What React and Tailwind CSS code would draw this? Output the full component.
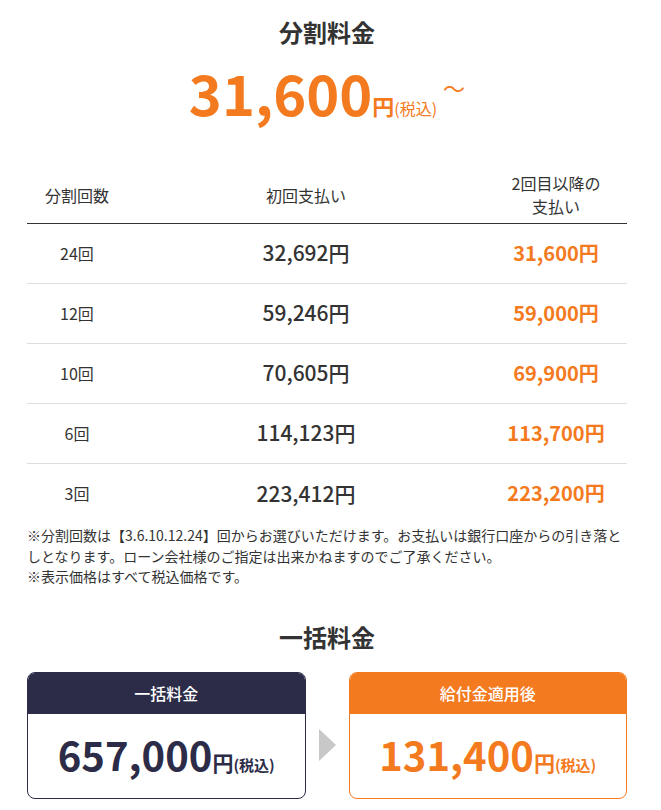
import React from "react";

const ORANGE = "text-[#f47a20]";

const rows = [
  { n: "24回", first: "32,692円", rest: "31,600円" },
  { n: "12回", first: "59,246円", rest: "59,000円" },
  { n: "10回", first: "70,605円", rest: "69,900円" },
  { n: "6回", first: "114,123円", rest: "113,700円" },
  { n: "3回", first: "223,412円", rest: "223,200円" },
];

function PriceCard({ label, amount, dark }) {
  return (
    <div className={`flex-1 rounded-lg border overflow-hidden bg-white ${dark ? "border-[#2c2c48]" : "border-[#f47a20]"}`}>
      <div className={`h-[41px] flex items-center justify-center text-white text-[16px] font-medium ${dark ? "bg-[#2c2c48]" : "bg-[#f47a20]"}`}>
        {label}
      </div>
      <div className={`h-[84px] flex items-center justify-center pb-[4px] ${dark ? "text-[#2c2c48]" : "text-[#f47a20]"}`}>
        <span className="text-[40px] font-bold leading-none">{amount}</span>
        <span className="text-[21px] font-bold leading-none self-end mb-[21px]">円</span>
        <span className="text-[15px] font-bold leading-none self-end mb-[22px]">(税込)</span>
      </div>
    </div>
  );
}

export default function App() {
  return (
    <div className="w-[661px] bg-white text-[#333] pl-[27px] pr-[34px] pt-[14px]" style={{ fontFamily: '"Noto Sans CJK JP", "Noto Sans", sans-serif' }}>
      <h2 className="text-center text-[24px] font-bold leading-[36px]">分割料金</h2>

      <div className={`flex justify-center items-end ${ORANGE} mt-[10px]`}>
        <span className="text-[56px] font-bold leading-[64px]">31,600</span>
        <span className="text-[22px] font-bold leading-none mb-[8px]">円</span>
        <span className="text-[16px] leading-none mb-[8px]">(税込)</span>
        <span className="text-[22px] leading-none self-center ml-[6px] mb-[10px]">～</span>
      </div>

      <table className="w-full mt-[43px] border-collapse">
        <thead>
          <tr className="border-b border-[#333] h-[56px]">
            <th className="w-[100px] text-[16px] font-normal">分割回数</th>
            <th className="text-[16px] font-normal pr-[12px]">初回支払い</th>
            <th className="w-[130px] text-[16px] font-normal leading-[23px] pr-[12px]">2回目以降の<br />支払い</th>
          </tr>
        </thead>
        <tbody>
          {rows.map((r, i) => (
            <tr key={r.n} className={`h-[60px] ${i < rows.length - 1 ? "border-b border-[#ddd]" : ""}`}>
              <td className="text-center text-[16px]">{r.n}</td>
              <td className="text-center text-[21px] font-medium pr-[12px]">{r.first}</td>
              <td className={`text-center text-[20px] font-bold ${ORANGE} pr-[12px]`}>{r.rest}</td>
            </tr>
          ))}
        </tbody>
      </table>

      <div className="text-[14px] leading-[20.5px] mt-[2px]">
        <p>※分割回数は【3.6.10.12.24】回からお選びいただけます。お支払いは銀行口座からの引き落としとなります。ローン会社様のご指定は出来かねますのでご了承ください。</p>
        <p>※表示価格はすべて税込価格です。</p>
      </div>

      <h2 className="text-center text-[24px] font-bold leading-[36px] mt-[32px]">一括料金</h2>

      <div className="flex items-center gap-[13px] mt-[17px] pb-[10px]">
        <PriceCard label="一括料金" amount="657,000" dark />
        <svg width="17" height="32" viewBox="0 0 17 32" className="shrink-0 mt-[20px]">
          <polygon points="0,0 17,16 0,32" fill="#c8c8c8" />
        </svg>
        <PriceCard label="給付金適用後" amount="131,400" />
      </div>
    </div>
  );
}
